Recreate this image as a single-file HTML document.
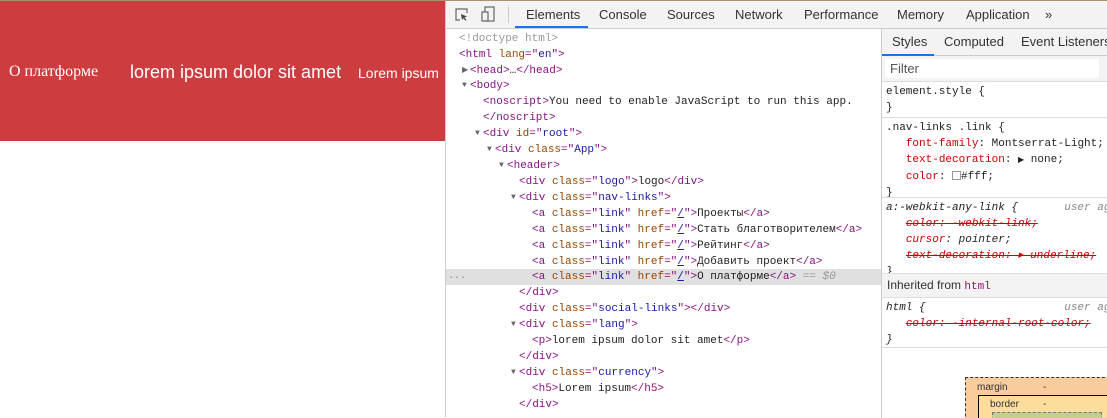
<!DOCTYPE html>
<html><head><meta charset="utf-8"><style>
*{margin:0;padding:0;box-sizing:border-box}
body{width:1107px;height:417px;overflow:hidden;background:#fff;position:relative;font-family:"Liberation Sans",sans-serif}
.red{position:absolute;left:0;top:1px;width:445px;height:140px;background:#cd3c3f;color:#fff;white-space:nowrap;overflow:hidden}
.red span{position:absolute}
.topline{position:absolute;left:0;top:0;width:1107px;height:1px;background:#a6936a}
.dev{position:absolute;left:445px;top:1px;width:662px;height:416px;border-left:1px solid #ccc}
.tb{position:absolute;left:0;top:0;width:662px;height:28px;background:#f3f3f3;border-bottom:1px solid #ccc;font-size:13px;color:#333;white-space:nowrap}
.tb span{position:absolute;top:6px}
.el{position:absolute;left:0;top:29px;width:435px;height:388px;font-family:"Liberation Mono",monospace;font-size:11px;color:#222}
.l{position:absolute;height:16px;line-height:16px;white-space:pre;left:0;width:435px}
.l b{font-weight:normal;position:absolute;font-size:8px;color:#666;top:0}
.t{color:#881280}.a{color:#994500}.v{color:#1a1aa6}.g{color:#999}
.side{position:absolute;left:435px;top:28px;width:227px;height:389px;border-left:1px solid #ccc;overflow:hidden}
.tabs{height:27px;background:#f3f3f3;border-bottom:1px solid #ccc;font-size:13px;color:#333;position:relative;white-space:nowrap}
.tabs span{position:absolute;top:5px}
.sec{border-bottom:1px solid #ddd;font-family:"Liberation Mono",monospace;font-size:11px;color:#222;padding:2px 0 0 4px;line-height:16px;white-space:pre;position:relative;overflow:hidden}
.p{color:#c80000}.s{text-decoration:line-through;color:#c80000}.i{font-style:italic}
</style></head><body>
<div class="topline"></div>
<div class="red">
<span style="left:9px;font-family:'Liberation Serif',serif;font-size:16px;top:62px">О платформе</span>
<span style="left:130px;font-size:18px;top:61px">lorem ipsum dolor sit amet</span>
<span style="left:358px;font-size:14px;top:64px">Lorem ipsum</span>
</div>
<div class="dev">
<div class="tb">
<svg style="position:absolute;left:9px;top:7px" width="14" height="14" viewBox="0 0 14 14"><path d="M5 12H1V1h11v4" fill="none" stroke="#666" stroke-width="1.2"/><path d="M6 6l6 2.5-2.5 1 2 2.5-1 .8-2-2.5L7 12z" fill="#444"/></svg>
<svg style="position:absolute;left:35px;top:5px" width="14" height="17" viewBox="0 0 14 17"><rect x="4" y="1" width="9" height="14" fill="none" stroke="#666" stroke-width="1.2"/><rect x="1" y="6" width="6" height="9" fill="#f3f3f3" stroke="#666" stroke-width="1.2"/></svg>
<div style="position:absolute;left:62px;top:5px;width:1px;height:17px;background:#ccc"></div>
<span style="left:80px">Elements</span>
<div style="position:absolute;left:69px;top:25px;width:73px;height:2px;background:#1a73e8"></div>
<span style="left:153px">Console</span>
<span style="left:221px">Sources</span>
<span style="left:289px">Network</span>
<span style="left:358px">Performance</span>
<span style="left:451px">Memory</span>
<span style="left:520px">Application</span>
<span style="left:599px">»</span>
</div>
<div class="el">
<div class="l" style="top:1px;padding-left:13px"><span class="g">&lt;!doctype html&gt;</span></div>
<div class="l" style="top:17px;padding-left:13px"><span class="t">&lt;html</span> <span class="a">lang</span><span class="t">="</span><span class="v">en</span><span class="t">"&gt;</span></div>
<div class="l" style="top:33px;padding-left:24px"><b style="left:16px">▶</b><span class="t">&lt;head&gt;</span>…<span class="t">&lt;/head&gt;</span></div>
<div class="l" style="top:48px;padding-left:24px"><b style="left:16px">▼</b><span class="t">&lt;body&gt;</span></div>
<div class="l" style="top:64px;padding-left:37px"><span class="t">&lt;noscript&gt;</span>You need to enable JavaScript to run this app.</div>
<div class="l" style="top:80px;padding-left:37px"><span class="t">&lt;/noscript&gt;</span></div>
<div class="l" style="top:96px;padding-left:37px"><b style="left:29px">▼</b><span class="t">&lt;div</span> <span class="a">id</span><span class="t">="</span><span class="v">root</span><span class="t">"&gt;</span></div>
<div class="l" style="top:112px;padding-left:49px"><b style="left:41px">▼</b><span class="t">&lt;div</span> <span class="a">class</span><span class="t">="</span><span class="v">App</span><span class="t">"&gt;</span></div>
<div class="l" style="top:128px;padding-left:61px"><b style="left:53px">▼</b><span class="t">&lt;header&gt;</span></div>
<div class="l" style="top:144px;padding-left:73px"><span class="t">&lt;div</span> <span class="a">class</span><span class="t">="</span><span class="v">logo</span><span class="t">"&gt;</span>logo<span class="t">&lt;/div&gt;</span></div>
<div class="l" style="top:160px;padding-left:73px"><b style="left:65px">▼</b><span class="t">&lt;div</span> <span class="a">class</span><span class="t">="</span><span class="v">nav-links</span><span class="t">"&gt;</span></div>
<div class="l" style="top:176px;padding-left:86px"><span class="t">&lt;a</span> <span class="a">class</span><span class="t">="</span><span class="v">link</span><span class="t">"</span> <span class="a">href</span><span class="t">="</span><span class="v" style="text-decoration:underline">/</span><span class="t">"&gt;</span>Проекты<span class="t">&lt;/a&gt;</span></div>
<div class="l" style="top:192px;padding-left:86px"><span class="t">&lt;a</span> <span class="a">class</span><span class="t">="</span><span class="v">link</span><span class="t">"</span> <span class="a">href</span><span class="t">="</span><span class="v" style="text-decoration:underline">/</span><span class="t">"&gt;</span>Стать благотворителем<span class="t">&lt;/a&gt;</span></div>
<div class="l" style="top:208px;padding-left:86px"><span class="t">&lt;a</span> <span class="a">class</span><span class="t">="</span><span class="v">link</span><span class="t">"</span> <span class="a">href</span><span class="t">="</span><span class="v" style="text-decoration:underline">/</span><span class="t">"&gt;</span>Рейтинг<span class="t">&lt;/a&gt;</span></div>
<div class="l" style="top:224px;padding-left:86px"><span class="t">&lt;a</span> <span class="a">class</span><span class="t">="</span><span class="v">link</span><span class="t">"</span> <span class="a">href</span><span class="t">="</span><span class="v" style="text-decoration:underline">/</span><span class="t">"&gt;</span>Добавить проект<span class="t">&lt;/a&gt;</span></div>
<div class="l" style="top:239px;background:#e0e0e0;padding-left:86px"><b style="left:2px;font-size:10px;color:#888">...</b><span class="t">&lt;a</span> <span class="a">class</span><span class="t">="</span><span class="v">link</span><span class="t">"</span> <span class="a">href</span><span class="t">="</span><span class="v" style="text-decoration:underline">/</span><span class="t">"&gt;</span>О платформе<span class="t">&lt;/a&gt;</span> <span class="g">== <i>$0</i></span></div>
<div class="l" style="top:255px;padding-left:73px"><span class="t">&lt;/div&gt;</span></div>
<div class="l" style="top:271px;padding-left:73px"><span class="t">&lt;div</span> <span class="a">class</span><span class="t">="</span><span class="v">social-links</span><span class="t">"&gt;&lt;/div&gt;</span></div>
<div class="l" style="top:287px;padding-left:73px"><b style="left:65px">▼</b><span class="t">&lt;div</span> <span class="a">class</span><span class="t">="</span><span class="v">lang</span><span class="t">"&gt;</span></div>
<div class="l" style="top:303px;padding-left:86px"><span class="t">&lt;p&gt;</span>lorem ipsum dolor sit amet<span class="t">&lt;/p&gt;</span></div>
<div class="l" style="top:319px;padding-left:73px"><span class="t">&lt;/div&gt;</span></div>
<div class="l" style="top:335px;padding-left:73px"><b style="left:65px">▼</b><span class="t">&lt;div</span> <span class="a">class</span><span class="t">="</span><span class="v">currency</span><span class="t">"&gt;</span></div>
<div class="l" style="top:351px;padding-left:86px"><span class="t">&lt;h5&gt;</span>Lorem ipsum<span class="t">&lt;/h5&gt;</span></div>
<div class="l" style="top:367px;padding-left:73px"><span class="t">&lt;/div&gt;</span></div>
</div>
<div class="side">
<div class="tabs"><span style="left:10px">Styles</span><span style="left:62px">Computed</span><span style="left:139px">Event Listeners</span>
<div style="position:absolute;left:0;top:25px;width:52px;height:2px;background:#1a73e8"></div></div>
<div style="height:26px;border-bottom:1px solid #ddd;background:#f3f3f3;position:relative"><div style="position:absolute;left:3px;top:3px;width:214px;height:19px;background:#fff;font-size:13px;color:#555;padding:2px 5px">Filter</div></div>
<div class="sec" style="height:36px">element.style {
}</div>
<div class="sec" style="height:80px">.nav-links .link {
   <span class="p">font-family</span>: Montserrat-Light;
   <span class="p">text-decoration</span>: <span style="font-size:8px">▶</span> none;
   <span class="p">color</span>: <span style="display:inline-block;width:9px;height:9px;border:1px solid #999;vertical-align:-1px"></span>#fff;
}</div>
<div class="sec i" style="height:76px;color:#222">a:-webkit-any-link {       <span style="color:#888">user ag</span>
   <span class="s">color: -webkit-link;</span>
   <span class="p">cursor</span>: pointer;
   <span class="s">text-decoration: ▸ underline;</span>
}</div>
<div style="height:24px;background:#f3f3f3;border-bottom:1px solid #ddd;font-size:12px;color:#333;padding:4px 5px">Inherited from <span style="font-family:'Liberation Mono',monospace;font-size:11px;color:#881280">html</span></div>
<div class="sec i" style="height:50px">html {                     <span style="color:#888">user ag</span>
   <span class="s">color: -internal-root-color;</span>
}</div>
<div style="position:absolute;left:83px;top:348px;width:150px;height:50px;background:#f9cc9d;border:1px dashed #333;font-size:10px;color:#333">
<span style="position:absolute;left:11px;top:4px">margin</span><span style="position:absolute;left:77px;top:4px">-</span>
<div style="position:absolute;left:12px;top:17px;width:140px;height:40px;background:#fddd9b;border:1px solid #000"><span style="position:absolute;left:11px;top:3px">border</span><span style="position:absolute;left:64px;top:3px">-</span>
<div style="position:absolute;left:13px;top:16px;width:110px;height:20px;background:#c3d08b;border:1px dashed #777"></div></div>
</div>
</div>
</div>
</body></html>
